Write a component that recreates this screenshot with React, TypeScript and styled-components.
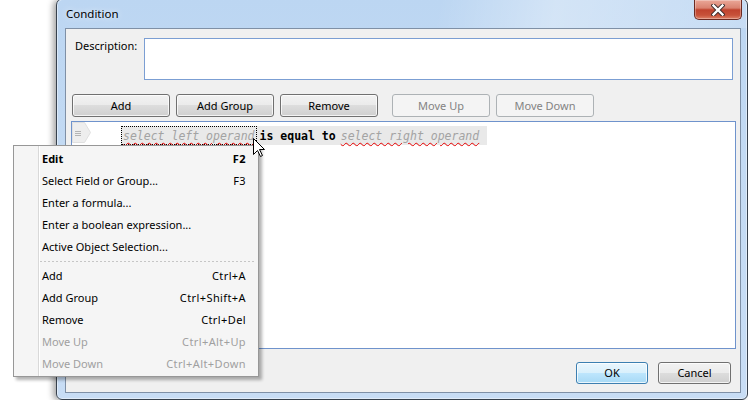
import React from 'react';
import styled, { createGlobalStyle } from 'styled-components';

const Global = createGlobalStyle`
  html, body { margin: 0; padding: 0; background: #ffffff; }
  body {
    font-family: "Noto Sans", "Open Sans", "Liberation Sans", sans-serif;
    font-size: 11px;
    color: #000;
  }
  * { box-sizing: border-box; }
`;

const Stage = styled.div`
  position: relative;
  width: 748px;
  height: 400px;
  overflow: hidden;
  background: #ffffff;
  display: flex;
  align-items: flex-start;
  padding-left: 56px;
`;

const Window = styled.div`
  width: 692px;
  height: 402px;
  margin-top: -2px;
  flex: none;
  border: 1px solid #37414d;
  border-radius: 7px 7px 6px 6px;
  background: linear-gradient(180deg, #bcd6f2 0%, #c3daf3 40%, #c8ddf5 100%);
  box-shadow: -3px 1px 6px rgba(0, 0, 0, 0.35), inset 0 0 0 1px rgba(255, 255, 255, 0.45);
  display: flex;
  flex-direction: column;
`;

const TitleBar = styled.div`
  height: 29px;
  flex: none;
  display: flex;
  align-items: flex-start;
  padding: 0 5px 0 9px;
  border-radius: 6px 6px 0 0;
  background: linear-gradient(100deg, rgba(255,255,255,0) 0%, rgba(255,255,255,0) 55%, rgba(255,255,255,0.35) 72%, rgba(255,255,255,0.15) 100%);
`;

const Title = styled.span`
  margin-top: 7px;
  font-size: 11.5px;
  line-height: 16px;
  color: #000;
  text-shadow: 0 0 6px rgba(255, 255, 255, 0.9);
`;

const CloseButton = styled.div`
  margin-left: auto;
  margin-top: 1px;
  width: 48px;
  height: 20px;
  border: 1px solid #6b2a22;
  border-top: none;
  border-radius: 0 0 5px 5px;
  background: linear-gradient(180deg, #eaa798 0%, #d98270 42%, #c0432e 52%, #c7523a 80%, #de8268 100%);
  box-shadow: inset 0 0 0 1px rgba(255, 255, 255, 0.3);
  display: flex;
  align-items: center;
  justify-content: center;
`;

const Client = styled.div`
  flex: 1;
  margin: 0 6px 6px 8px;
  border: 1px solid #7f90a6;
  background: #f0f0f0;
  display: flex;
  flex-direction: column;
`;

const DescriptionRow = styled.div`
  display: flex;
  padding: 9px 7px 0 9px;
`;

const Label = styled.label`
  width: 69px;
  flex: none;
  line-height: 15px;
`;

const TextBox = styled.div`
  flex: 1;
  height: 42px;
  background: #ffffff;
  border: 1px solid #7b9ed3;
`;

const Toolbar = styled.div`
  display: flex;
  gap: 6px;
  padding: 14px 0 0 6px;
`;

const Button = styled.div<{ $disabled?: boolean; $default?: boolean; $w?: number; $h?: number; $spaced?: boolean }>`
  width: ${p => p.$w ?? 98}px;
  height: ${p => p.$h ?? 23}px;
  margin-left: ${p => (p.$spaced ? 8 : 0)}px;
  display: flex;
  align-items: center;
  justify-content: center;
  border-radius: 3px;
  border: 1px solid ${p => (p.$disabled ? '#adb2b5' : p.$default ? '#3c7fb1' : '#707070')};
  background: ${p =>
    p.$disabled
      ? '#f4f4f4'
      : p.$default
      ? 'linear-gradient(180deg, #eaf6fd 0%, #d9f0fc 49%, #bee6fd 50%, #a7d9f5 100%)'
      : 'linear-gradient(180deg, #f2f2f2 0%, #ebebeb 49%, #dddddd 50%, #cfcfcf 100%)'};
  box-shadow: ${p => (p.$disabled ? 'none' : 'inset 0 0 0 1px rgba(255,255,255,0.75)')};
  color: ${p => (p.$disabled ? '#838383' : '#000')};
  line-height: 16px;
`;

const Editor = styled.div`
  height: 228px;
  margin: 4px 4px 0 5px;
  border: 1px solid #6f93cc;
  background: #ffffff;
  display: flex;
  align-items: flex-start;
`;

const ConditionLine = styled.div`
  margin: 4px 0 0 29px;
  height: 19px;
  display: flex;
  align-items: center;
  padding-right: 6px;
  background: #e9e9e9;
  font-family: "DejaVu Sans Mono", "Liberation Mono", monospace;
  font-size: 11.5px;
  white-space: pre;
`;

const Operand = styled.span<{ $focused?: boolean }>`
  height: 19px;
  display: flex;
  align-items: center;
  padding: 0 1px;
  border: 1px dotted ${p => (p.$focused ? '#000' : 'transparent')};
  color: #a3a3a3;
  font-style: italic;
  text-decoration: underline wavy #e60000;
  text-decoration-thickness: 1px;
  text-underline-offset: 2px;
`;

const Operator = styled.span`
  font-weight: 700;
  color: #000;
  margin: 0 3px 0 3px;
`;

const Footer = styled.div`
  margin-top: auto;
  display: flex;
  justify-content: flex-end;
  gap: 10px;
  padding: 0 9px 8px 0;
`;

const Menu = styled.div`
  position: absolute;
  left: 13px;
  top: 145px;
  width: 246px;
  padding: 2px 0 1px;
  border: 1px solid #979797;
  background-color: #f5f5f5;
  background-image: linear-gradient(to right, transparent 24px, #d9d9d9 24px, #d9d9d9 25px, #ffffff 25px, #ffffff 26px, transparent 26px);
  box-shadow: 3px 3px 3px rgba(0, 0, 0, 0.3);
`;

const MenuItem = styled.div<{ $disabled?: boolean; $bold?: boolean }>`
  height: 22px;
  display: flex;
  align-items: center;
  justify-content: space-between;
  padding: 0 12px 1px 28px;
  color: ${p => (p.$disabled ? '#a0a0a0' : '#000')};
  font-weight: ${p => (p.$bold ? 700 : 400)};
`;

const Shortcut = styled.span`
  letter-spacing: 0.4px;
`;

const Separator = styled.div`
  height: 7px;
  margin: 0 2px 0 26px;
  background-image: repeating-linear-gradient(to right, #c6c6c6 0, #c6c6c6 2px, transparent 2px, transparent 4px);
  background-size: 100% 1px;
  background-position: 0 3px;
  background-repeat: no-repeat;
`;

const Cursor = styled.svg`
  position: absolute;
  left: 252px;
  top: 137px;
`;

const menuTop: Array<[string, string, boolean?]> = [
  ['Select Field or Group...', 'F3'],
  ['Enter a formula...', ''],
  ['Enter a boolean expression...', ''],
  ['Active Object Selection...', ''],
];

const menuBottom: Array<[string, string, boolean?]> = [
  ['Add', 'Ctrl+A'],
  ['Add Group', 'Ctrl+Shift+A'],
  ['Remove', 'Ctrl+Del'],
  ['Move Up', 'Ctrl+Alt+Up', true],
  ['Move Down', 'Ctrl+Alt+Down', true],
];

export default function App() {
  return (
    <Stage>
      <Global />
      <Window>
        <TitleBar>
          <Title>Condition</Title>
          <CloseButton>
            <svg width="14" height="12" viewBox="0 0 14 12">
              <path d="M2.5 1.5 L11.5 10.5 M11.5 1.5 L2.5 10.5" stroke="#3b2a2a" strokeWidth="4.2" strokeLinecap="square" fill="none" />
              <path d="M2.5 1.5 L11.5 10.5 M11.5 1.5 L2.5 10.5" stroke="#ffffff" strokeWidth="2.4" strokeLinecap="square" fill="none" />
            </svg>
          </CloseButton>
        </TitleBar>
        <Client>
          <DescriptionRow>
            <Label>Description:</Label>
            <TextBox />
          </DescriptionRow>
          <Toolbar>
            <Button>Add</Button>
            <Button>Add Group</Button>
            <Button>Remove</Button>
            <Button $disabled $spaced>Move Up</Button>
            <Button $disabled>Move Down</Button>
          </Toolbar>
          <Editor>
            <svg width="20" height="21" viewBox="0 0 20 21" style={{ flex: 'none' }}>
              <path d="M0.5 0.5 H12.5 L18.5 10.5 L12.5 20.5 H0.5 Z" fill="#eeeeee" stroke="#e0e0e0" />
              <path d="M3 9.5 H9 M3 11.5 H9 M3 13.5 H9" stroke="#b4b4b4" strokeWidth="1" />
            </svg>
            <ConditionLine>
              <Operand $focused>select left operand</Operand>
              <Operator>is equal to</Operator>
              <Operand>select right operand</Operand>
            </ConditionLine>
          </Editor>
          <Footer>
            <Button $default $w={72} $h={22}>OK</Button>
            <Button $w={73} $h={22}>Cancel</Button>
          </Footer>
        </Client>
      </Window>

      <Menu>
        <MenuItem $bold>
          <span>Edit</span>
          <Shortcut>F2</Shortcut>
        </MenuItem>
        {menuTop.map(([label, key]) => (
          <MenuItem key={label}>
            <span>{label}</span>
            <Shortcut>{key}</Shortcut>
          </MenuItem>
        ))}
        <Separator />
        {menuBottom.map(([label, key, dis]) => (
          <MenuItem key={label} $disabled={dis}>
            <span>{label}</span>
            <Shortcut>{key}</Shortcut>
          </MenuItem>
        ))}
      </Menu>

      <Cursor width="14" height="21" viewBox="0 0 14 21">
        <path d="M1.5 1.5 L1.5 17.5 L5.5 13.5 L8.5 19.5 L10.5 18.5 L7.5 12.5 L12.5 12.5 Z" fill="#ffffff" stroke="#000000" strokeWidth="1" strokeLinejoin="miter" />
      </Cursor>
    </Stage>
  );
}
